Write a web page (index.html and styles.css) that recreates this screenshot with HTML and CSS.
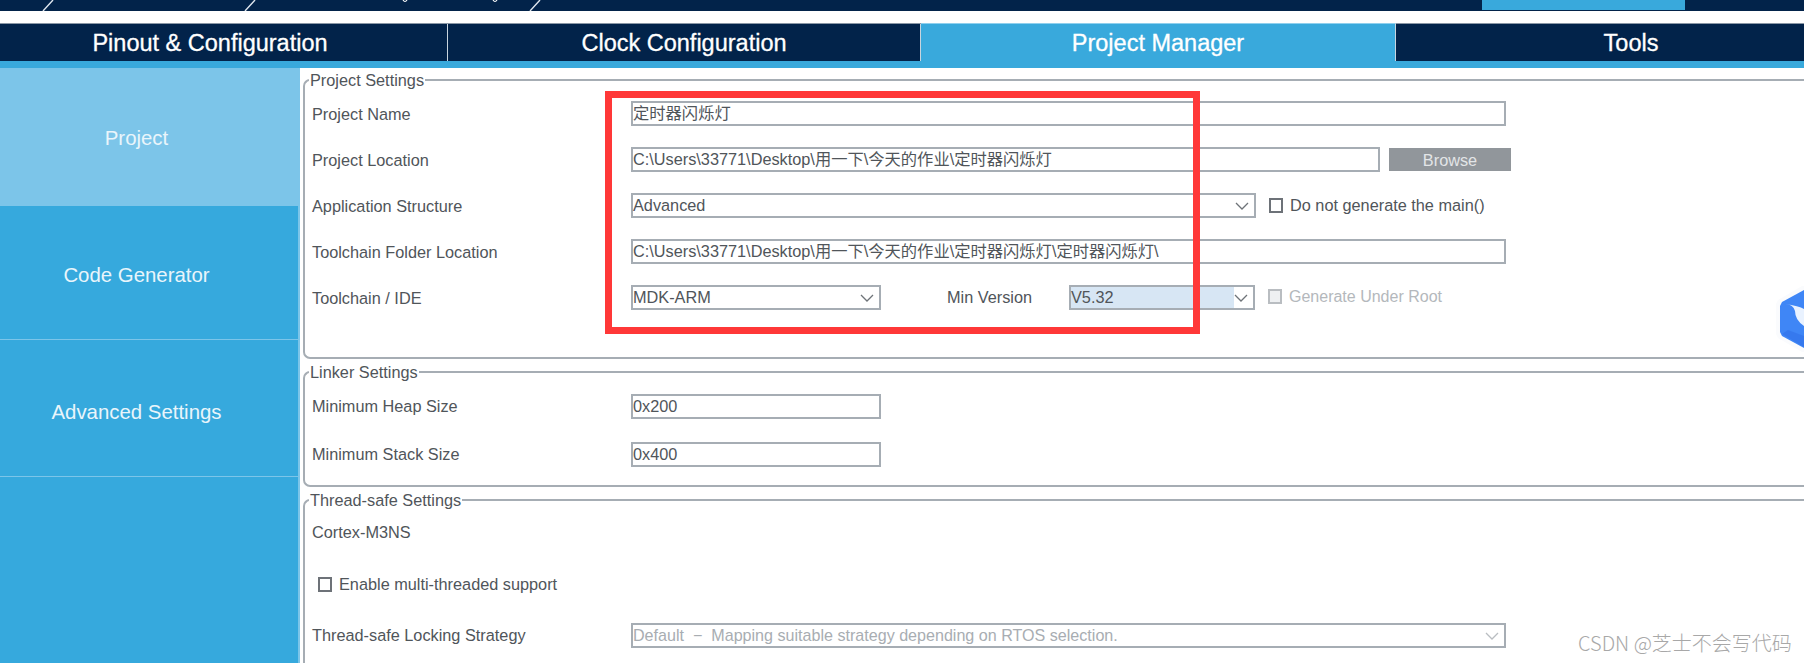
FILE: index.html
```html
<!DOCTYPE html>
<html lang="zh-CN">
<head>
<meta charset="utf-8">
<title>Project Manager</title>
<link rel="stylesheet" href="styles.css">
</head>
<body>
<div class="page">
  <div class="topbar">
    <svg class="top-slashes" width="600" height="11" viewBox="0 0 600 11" aria-hidden="true">
      <path d="M43 11 L53 0 M245 11 L255 0 M530 11 L540 0" stroke="#dfe6ee" stroke-width="1.4" fill="none"/>
      <path d="M403 0 q2 3 4 0 M493 0 q2 3 4 0" stroke="#fff" stroke-width="1.2" fill="none"/>
    </svg>
    <div class="top-active"></div>
  </div>
  <nav class="tabs">
    <div class="tab t1">Pinout &amp; Configuration</div>
    <div class="tab t2">Clock Configuration</div>
    <div class="tab t3 active">Project Manager</div>
    <div class="tab t4">Tools</div>
  </nav>
  <div class="strip"></div>
  <div class="main">
    <aside class="side">
      <div class="side-item sel">Project</div>
      <div class="side-item gen">Code Generator</div>
      <div class="side-item adv">Advanced Settings</div>
    </aside>
    <section class="content">
      <fieldset class="group g-project">
        <legend>Project Settings</legend>
        <div class="row">
          <div class="label">Project Name</div>
          <div class="field w-full zh">定时器闪烁灯</div>
        </div>
        <div class="row">
          <div class="label">Project Location</div>
          <div class="field w-loc zh">C:\Users\33771\Desktop\用一下\今天的作业\定时器闪烁灯</div>
          <div class="btn">Browse</div>
        </div>
        <div class="row">
          <div class="label">Application Structure</div>
          <div class="field select w-struct">Advanced
            <svg class="chev" width="14" height="8" viewBox="0 0 14 8"><path d="M1 1 L7 7 L13 1"/></svg>
          </div>
          <div class="check"></div>
          <div class="check-text">Do not generate the main()</div>
        </div>
        <div class="row">
          <div class="label">Toolchain Folder Location</div>
          <div class="field w-full zh">C:\Users\33771\Desktop\用一下\今天的作业\定时器闪烁灯\定时器闪烁灯\</div>
        </div>
        <div class="row">
          <div class="label">Toolchain / IDE</div>
          <div class="field select w-short">MDK-ARM
            <svg class="chev" width="14" height="8" viewBox="0 0 14 8"><path d="M1 1 L7 7 L13 1"/></svg>
          </div>
          <div class="min-label">Min Version</div>
          <div class="field select w-min"><span class="hl">V5.32</span>
            <svg class="chev" width="14" height="8" viewBox="0 0 14 8"><path d="M1 1 L7 7 L13 1"/></svg>
          </div>
          <div class="check off"></div>
          <div class="check-text off">Generate Under Root</div>
        </div>
      </fieldset>
      <fieldset class="group g-linker">
        <legend>Linker Settings</legend>
        <div class="row">
          <div class="label">Minimum Heap Size</div>
          <div class="field w-short">0x200</div>
        </div>
        <div class="row">
          <div class="label">Minimum Stack Size</div>
          <div class="field w-short">0x400</div>
        </div>
      </fieldset>
      <fieldset class="group g-thread">
        <legend>Thread-safe Settings</legend>
        <div class="label cortex">Cortex-M3NS</div>
        <div class="enable"><div class="check"></div><div class="check-text">Enable multi-threaded support</div></div>
        <div class="row">
          <div class="label">Thread-safe Locking Strategy</div>
          <div class="field select w-full off dflt">Default &nbsp;−&nbsp; Mapping suitable strategy depending on RTOS selection.
            <svg class="chev" width="14" height="8" viewBox="0 0 14 8"><path d="M1 1 L7 7 L13 1"/></svg>
          </div>
        </div>
      </fieldset>
    </section>
  </div>
  <div class="redbox"></div>
  <svg class="badge" width="28" height="66" viewBox="0 0 28 66" aria-hidden="true">
    <path d="M28 0 L26 0 L2 14 L0 18 L0 48 L2 52 L26 66 L28 66 Z" fill="#fafbfd"/>
    <path d="M28 4 L6 16 L4 20 L4 46 L6 50 L28 62 Z" fill="#3f86f6"/>
    <path d="M28 50 L12 44 L6 48 L28 61 Z" fill="#2f6fe8" opacity=".55"/>
    <path d="M9 18 Q17 18 19 25 Q19 34 28 40 L28 23 Q23 20 9 18 Z" fill="#e9f2ff"/>
  </svg>
  <div class="mark">CSDN @芝士不会写代码</div>
</div>
</body>
</html>
```

FILE: styles.css
```css
* { box-sizing: border-box; }
html, body { margin: 0; padding: 0; background: #fff; }
.page {
  position: relative;
  width: 1804px;
  height: 663px;
  overflow: hidden;
  font-family: "Liberation Sans", "Noto Sans CJK SC", sans-serif;
  color: #50555a;
}
.topbar {
  position: relative;
  height: 11px;
  background: #02234a;
  display: flex;
  justify-content: flex-end;
  padding-right: 119px;
}
.top-slashes { position: absolute; left: 0; top: 0; }
.top-active { width: 203px; height: 10px; background: #39a9dc; }
.tabs {
  margin-top: 12px;
  height: 38px;
  display: flex;
  background: #02234a;
  border-top: 1px solid #8a97a6;
  color: #fff;
  font-size: 23.5px;
  -webkit-text-stroke: 0.3px #fff;
}
.tab {
  display: flex;
  align-items: center;
  justify-content: center;
  padding-top: 2px;
  border-right: 1px solid #c8d4de;
}
.t1 { width: 448px; padding-right: 27px; }
.t2 { width: 473px; }
.t3 { width: 475px; }
.t4 { flex: 1; border-right: 0; padding-left: 62px; }
.tab.active { background: #39a9dc; border-top: 1px solid #8fd0ee; margin-top: -1px; }
.strip { height: 7px; background: #39a9dc; }
.main { display: flex; height: 595px; }
.side {
  width: 300px;
  flex: none;
  background: #36a9dd;
  color: #e9f5fb;
  font-size: 20.4px;
  border-right: 2px solid #7cc5e9;
}
.side-item {
  display: flex;
  align-items: center;
  justify-content: center;
  padding-right: 25px;
  border-bottom: 1px solid #7cc5e9;
}
.side-item.sel { height: 138px; background: #7cc5e9; border-bottom: 0; padding-top: 2px; }
.side-item.gen { height: 134px; padding-top: 5px; }
.side-item.adv { height: 137px; padding-top: 9px; }
.content {
  flex: 1;
  min-width: 0;
  overflow: hidden;
  padding: 2px 0 0 3px;
}
.group {
  margin: 0 -12px 0 0;
  padding: 0 0 0 6px;
  border: 2px solid #a6adb4;
  border-right: 0;
  border-radius: 7px 0 0 7px;
  min-width: 0;
}
.group legend {
  padding: 0 1px;
  margin-left: -2px;
  height: 20px;
  line-height: 20px;
  font-size: 16.3px;
}
.g-project { height: 289px; padding-top: 11px; }
.g-project .label { padding-top: 1px; }
.g-linker { margin-top: 3px; height: 125px; padding-top: 12px; }
.g-linker .row + .row { margin-top: 23px; }
.g-thread { margin-top: 3px; height: 200px; border-bottom: 0; border-radius: 7px 0 0 0; }
.row {
  display: flex;
  align-items: center;
  height: 25px;
}
.row + .row { margin-top: 21px; }
.label {
  width: 320px;
  flex: none;
  padding-left: 1px;
  font-size: 16.3px;
  white-space: nowrap;
}
.field {
  position: relative;
  flex: none;
  height: 25px;
  border: 2px solid #a6adb4;
  background: #fff;
  font-size: 16.3px;
  line-height: 21px;
  white-space: nowrap;
}
.w-full { width: 875px; }
.w-loc { width: 749px; }
.w-struct { width: 625px; }
.w-short { width: 250px; }
.w-min { width: 186px; }
.field.off { color: #a8adb2; }
.dflt { font-size: 16.1px; }
.select .chev { position: absolute; right: 5px; top: 7px; fill: none; stroke: #6e7378; stroke-width: 1.3; }
.select.off .chev { stroke: #b9bdc1; }
.hl { display: block; width: 163px; height: 21px; background: #d7e6f4; }
.btn {
  flex: none;
  width: 122px;
  height: 23px;
  margin-left: 9px;
  background: #91969b;
  color: #e3e5e7;
  font-size: 16.3px;
  line-height: 24px;
  text-align: center;
}
.check {
  flex: none;
  width: 14px;
  height: 15px;
  margin-left: 13px;
  border: 2px solid #6d7278;
  background: #fff;
}
.check.off { border-color: #b9bdc1; background: #eef0f2; margin-top: -3px; }
.check-text { flex: none; margin-left: 7px; font-size: 16.3px; white-space: nowrap; }
.check-text.off { color: #b4b8bc; margin-top: -2px; font-size: 16px; }
.min-label { flex: none; width: 122px; margin-left: 66px; font-size: 16.3px; }
.cortex { margin-top: 12px; line-height: 20px; }
.enable { display: flex; align-items: center; margin-top: 32px; height: 20px; }
.enable .check { margin-left: 7px; }
.g-thread .row { margin-top: 29px; }
.redbox {
  position: absolute;
  left: 605px;
  top: 91px;
  width: 595px;
  height: 243px;
  border: 7px solid #ff3838;
}
.badge { position: absolute; left: 1776px; top: 286px; }
.mark {
  position: absolute;
  left: 1578px;
  top: 631px;
  font-size: 20px;
  line-height: 24px;
  color: #a8a8a8;
  font-family: "Noto Sans CJK SC", sans-serif;
  font-weight: 300;
  white-space: nowrap;
}
```
